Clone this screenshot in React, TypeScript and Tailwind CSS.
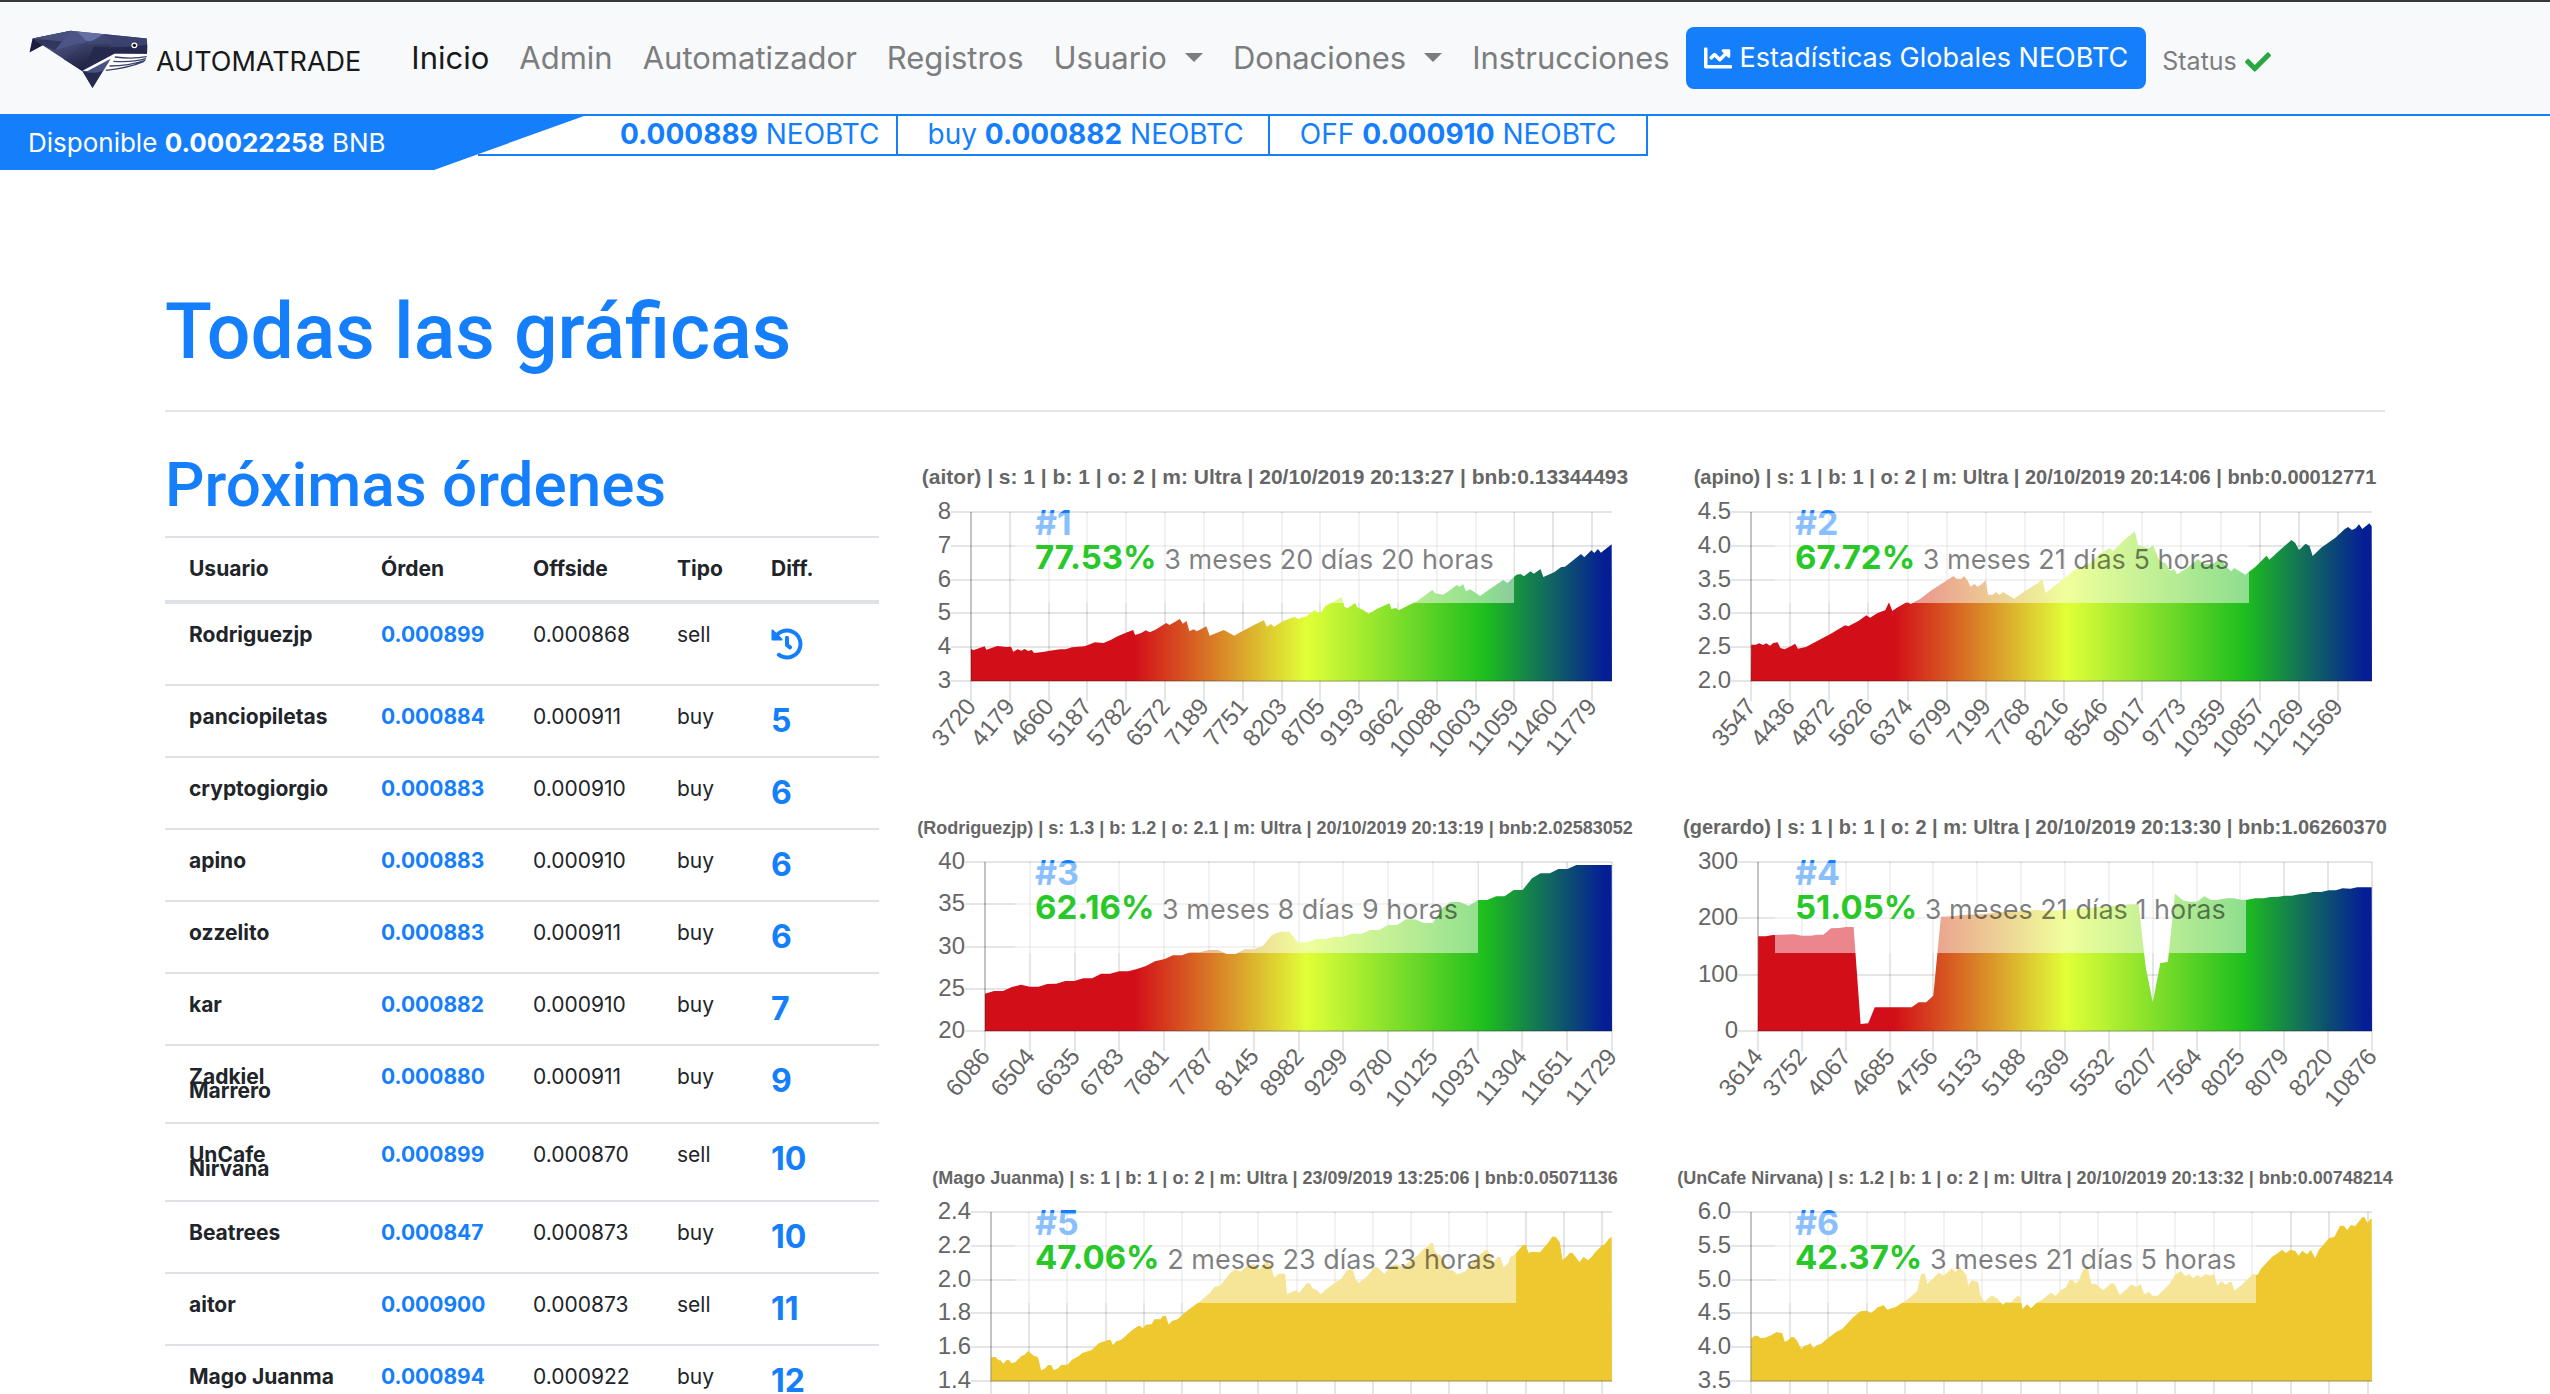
import React from "react";
import { FaChartLine, FaCheck, FaHistory } from "react-icons/fa";

type Order = { user: string; price: string; offside: string; side: string; diff: number | null };

const orders: Order[] = [
  { user: "Rodriguezjp", price: "0.000899", offside: "0.000868", side: "sell", diff: null },
  { user: "panciopiletas", price: "0.000884", offside: "0.000911", side: "buy", diff: 5 },
  { user: "cryptogiorgio", price: "0.000883", offside: "0.000910", side: "buy", diff: 6 },
  { user: "apino", price: "0.000883", offside: "0.000910", side: "buy", diff: 6 },
  { user: "ozzelito", price: "0.000883", offside: "0.000911", side: "buy", diff: 6 },
  { user: "kar", price: "0.000882", offside: "0.000910", side: "buy", diff: 7 },
  { user: "Zadkiel Marrero", price: "0.000880", offside: "0.000911", side: "buy", diff: 9 },
  { user: "UnCafe Nirvana", price: "0.000899", offside: "0.000870", side: "sell", diff: 10 },
  { user: "Beatrees", price: "0.000847", offside: "0.000873", side: "buy", diff: 10 },
  { user: "aitor", price: "0.000900", offside: "0.000873", side: "sell", diff: 11 },
  { user: "Mago Juanma", price: "0.000894", offside: "0.000922", side: "buy", diff: 12 },
];

type Chart = {
  title: string;
  titleSize: string;
  rank: number;
  gain: string;
  age: string;
  yLabels: string[];
  left: number;
  lastTick: number;
  ticks: number;
  xLabels: string[];
  rainbow: boolean;
  samples: string;
};

const charts: Chart[] = [
  {
    title: "(aitor) | s: 1 | b: 1 | o: 2 | m: Ultra | 20/10/2019 20:13:27 | bnb:0.13344493",
    titleSize: "text-[21px]",
    rank: 1,
    gain: "77.53%",
    age: "3 meses 20 días 20 horas",
    yLabels: ["8", "7", "6", "5", "4", "3"],
    left: 46,
    lastTick: 667,
    ticks: 17,
    xLabels: ["3720", "4179", "4660", "5187", "5782", "6572", "7189", "7751", "8203", "8705", "9193", "9662", "10088", "10603", "11059", "11460", "11779"],
    rainbow: true,
    samples:
      "129,599 134,604 155,593 158,592 162,602 185,591 205,594 214,593 219,608 228,601 236,605 243,600 250,606 258,603 263,612 285,608 296,605 318,601 330,601 343,595 370,592 392,580 410,582 425,573 440,562 460,550 473,543 477,558 490,552 500,544 508,550 520,542 543,522 550,528 572,510 578,524 586,516 592,547 601,541 608,547 628,532 635,560 665,543 687,560 700,550 730,527 750,514 756,533 765,525 771,533 790,517 815,503 822,510 840,502 858,483 865,493 873,487 880,471 900,456 915,444 921,474 928,477 943,462 949,476 960,482 972,495 990,479 1016,463 1020,480 1029,477 1036,484 1050,473 1075,456 1107,423 1113,433 1130,437 1145,423 1158,408 1165,413 1172,405 1178,427 1187,421 1208,441 1225,424 1257,393 1266,402 1285,377 1294,375 1301,382 1315,367 1322,374 1336,360 1342,384 1365,370 1380,354 1388,353 1422,315 1429,325 1444,304 1450,312 1458,300 1464,311 1487,286",
  },
  {
    title: "(apino) | s: 1 | b: 1 | o: 2 | m: Ultra | 20/10/2019 20:14:06 | bnb:0.00012771",
    titleSize: "text-[20px]",
    rank: 2,
    gain: "67.72%",
    age: "3 meses 21 días 5 horas",
    yLabels: ["4.5", "4.0", "3.5", "3.0", "2.5", "2.0"],
    left: 66,
    lastTick: 653,
    ticks: 16,
    xLabels: ["3547", "4436", "4872", "5626", "6374", "6799", "7199", "7768", "8216", "8546", "9017", "9773", "10359", "10857", "11269", "11569"],
    rainbow: true,
    samples:
      "172,587 182,587 189,583 197,588 204,583 212,590 219,582 228,580 234,597 243,601 257,591 265,584 271,599 288,594 340,555 371,529 378,532 400,515 416,499 424,506 440,492 456,484 464,460 471,486 480,477 503,458 510,465 530,450 555,423 601,381 607,389 618,389 623,381 631,395 637,413 645,405 652,413 660,406 669,394 674,437 684,437 691,429 698,438 706,429 729,449 752,427 780,402 789,390 796,432 830,394 858,362 880,350 895,338 910,315 932,297 939,306 960,276 985,247 992,288 1000,293 1015,298 1024,289 1034,325 1040,340 1050,341 1060,365 1068,360 1075,376 1095,358 1119,330 1130,345 1150,345 1165,330 1180,355 1189,367 1196,357 1219,377 1240,354 1264,320 1270,332 1295,300 1317,273 1325,282 1333,303 1347,284 1355,290 1362,321 1380,296 1410,266 1430,240 1437,234 1445,243 1453,238 1460,226 1467,240 1482,223 1487,232",
  },
  {
    title: "(Rodriguezjp) | s: 1.3 | b: 1.2 | o: 2.1 | m: Ultra | 20/10/2019 20:13:19 | bnb:2.02583052",
    titleSize: "text-[18px]",
    rank: 3,
    gain: "62.16%",
    age: "3 meses 8 días 9 horas",
    yLabels: ["40", "35", "30", "25", "20"],
    left: 60,
    lastTick: 687,
    ticks: 15,
    xLabels: ["6086", "6504", "6635", "6783", "7681", "7787", "8145", "8982", "9299", "9780", "10125", "10937", "11304", "11651", "11729"],
    rainbow: true,
    samples:
      "159,584 178,576 197,576 216,564 235,557 254,563 272,563 291,555 310,554 329,546 348,546 367,538 386,538 405,524 424,524 443,517 462,517 481,510 500,501 519,487 540,480 557,469 576,469 594,460 614,460 634,453 653,453 671,465 690,465 709,451 729,451 747,442 767,408 785,398 804,398 822,430 842,430 861,420 880,420 898,413 917,413 936,404 957,404 975,393 994,393 1013,378 1032,378 1051,361 1070,361 1089,372 1108,372 1126,330 1145,309 1165,309 1184,320 1204,303 1223,303 1242,292 1260,292 1279,273 1298,273 1318,238 1336,223 1356,223 1374,210 1393,210 1412,198 1487,198",
  },
  {
    title: "(gerardo) | s: 1 | b: 1 | o: 2 | m: Ultra | 20/10/2019 20:13:30 | bnb:1.06260370",
    titleSize: "text-[20px]",
    rank: 4,
    gain: "51.05%",
    age: "3 meses 21 días 1 horas",
    yLabels: ["300", "200", "100", "0"],
    left: 73,
    lastTick: 687,
    ticks: 15,
    xLabels: ["3614", "3752", "4067", "4685", "4756", "5153", "5188", "5369", "5532", "6207", "7564", "8025", "8079", "8220", "10876"],
    rainbow: true,
    samples:
      "187,412 203,412 218,408 235,407 262,406 280,410 298,410 312,407 325,407 341,388 358,387 373,384 389,384 404,675 420,673 434,625 512,625 527,610 543,610 558,590 574,353 605,351 620,348 660,346 700,340 740,337 775,333 800,335 840,333 880,328 930,322 977,316 993,316 1008,505 1023,610 1039,492 1055,489 1070,284 1087,304 1100,308 1117,308 1132,292 1147,303 1162,302 1180,298 1195,298 1210,302 1223,302 1240,298 1257,298 1272,294 1290,293 1302,290 1318,290 1333,286 1348,284 1362,279 1380,279 1396,274 1411,274 1425,268 1442,269 1456,265 1487,265",
  },
  {
    title: "(Mago Juanma) | s: 1 | b: 1 | o: 2 | m: Ultra | 23/09/2019 13:25:06 | bnb:0.05071136",
    titleSize: "text-[18px]",
    rank: 5,
    gain: "47.06%",
    age: "2 meses 23 días 23 horas",
    yLabels: ["2.4", "2.2", "2.0", "1.8", "1.6", "1.4"],
    left: 66,
    lastTick: 677,
    ticks: 17,
    xLabels: [],
    rainbow: false,
    samples:
      "172,624 181,624 188,634 192,634 198,644 205,633 210,633 215,643 223,640 230,630 237,620 243,618 250,606 256,613 263,621 271,624 278,664 287,658 292,648 299,648 305,664 314,658 320,648 334,647 343,632 358,621 365,612 385,603 400,583 420,573 425,573 430,588 437,577 447,573 455,563 468,547 483,531 488,531 493,538 500,527 512,526 518,511 531,511 536,501 542,501 548,527 555,516 567,511 590,482 612,460 637,430 645,413 657,410 665,396 680,370 690,360 700,368 715,350 730,345 740,362 755,335 765,350 772,387 780,374 795,374 799,435 810,428 818,424 825,431 835,413 841,403 847,403 853,418 863,424 871,436 880,423 900,402 915,388 925,365 938,360 945,393 952,401 970,380 985,353 992,356 1005,375 1020,350 1030,345 1045,355 1060,335 1075,320 1088,300 1098,292 1103,282 1108,282 1113,310 1125,320 1140,362 1150,364 1160,376 1175,368 1190,345 1205,320 1220,303 1225,304 1232,330 1238,338 1245,324 1251,324 1258,355 1268,342 1272,325 1283,315 1299,288 1305,288 1311,312 1317,308 1335,310 1345,293 1352,282 1361,263 1368,263 1377,280 1383,334 1392,322 1398,312 1404,312 1411,325 1419,340 1427,324 1437,334 1445,323 1452,310 1465,292 1473,285 1480,271 1487,263",
  },
  {
    title: "(UnCafe Nirvana) | s: 1.2 | b: 1 | o: 2 | m: Ultra | 20/10/2019 20:13:32 | bnb:0.00748214",
    titleSize: "text-[18px]",
    rank: 6,
    gain: "42.37%",
    age: "3 meses 21 días 5 horas",
    yLabels: ["6.0", "5.5", "5.0", "4.5", "4.0", "3.5"],
    left: 66,
    lastTick: 683,
    ticks: 17,
    xLabels: [],
    rainbow: false,
    samples:
      "172,568 180,560 186,560 192,568 202,566 215,558 226,549 238,553 243,578 250,574 257,564 263,565 270,577 278,600 285,590 293,587 297,582 304,598 312,588 320,585 335,567 353,548 365,540 375,525 388,505 404,487 418,485 425,493 434,483 440,475 453,469 460,482 478,474 492,461 508,446 524,425 532,375 540,374 545,404 560,385 570,371 580,380 597,358 606,370 613,352 620,365 628,378 632,410 640,393 653,400 658,440 666,458 682,439 695,450 705,467 712,459 723,460 735,442 742,442 747,480 757,466 765,478 778,460 790,451 805,433 810,433 817,441 828,424 838,416 847,393 853,393 860,404 868,390 874,366 884,350 893,404 903,406 918,424 935,403 942,404 953,438 968,420 978,406 988,415 997,405 1005,436 1015,428 1022,440 1033,440 1045,424 1058,406 1072,375 1083,366 1092,382 1100,375 1108,388 1118,378 1125,386 1135,375 1145,380 1153,376 1160,410 1168,396 1178,408 1185,399 1190,400 1196,425 1212,407 1235,375 1245,378 1252,360 1275,325 1297,303 1305,312 1315,302 1325,306 1332,320 1340,305 1350,316 1358,303 1367,328 1375,303 1397,267 1408,264 1420,230 1428,230 1435,243 1443,228 1452,232 1460,217 1467,205 1472,205 1478,222 1484,210 1487,210",
  },
];

const TOP = 63;
const BOTTOM = 232;
const RIGHT = 687;

// Samples sit on a finer grid than the drawing; this brings them to drawing units.
function toPoint(pair: string) {
  const [x, y] = pair.split(",").map(Number);
  return `${(x * 0.4719 - 15).toFixed(1)},${(y / 3).toFixed(1)}`;
}

function AreaChart({ chart }: { chart: Chart }) {
  const { left, ticks, lastTick, yLabels } = chart;
  const area = `${left},${BOTTOM} ${chart.samples.split(" ").map(toPoint).join(" ")} ${RIGHT},${BOTTOM}`;
  const fillId = `fill-${chart.rank}`;
  const xs = Array.from({ length: ticks }, (_, i) => Math.round(left + ((lastTick - left) * i) / (ticks - 1)));
  const ys = yLabels.map((_, i) => Math.round(TOP + ((BOTTOM - TOP) * i) / (yLabels.length - 1)));
  return (
    <figure className="relative">
      <svg viewBox="0 0 700 350" className="block w-full overflow-visible font-['Liberation_Sans',sans-serif]" role="img" aria-label={chart.title}>
        <defs>
          <linearGradient id={fillId} gradientUnits="userSpaceOnUse" x1="0" y1="0" x2="700" y2="0">
            <stop offset="0.3" stopColor="#d20f18" />
            <stop offset="0.545" stopColor="#e1ff37" />
            <stop offset="0.8" stopColor="#1ebe1e" />
            <stop offset="0.97" stopColor="#051e96" />
          </linearGradient>
        </defs>
        <text x="350" y="35" textAnchor="middle" className={`fill-[#666] font-bold ${chart.titleSize}`}>
          {chart.title}
        </text>
        {ys.map((y) => (
          <line key={y} x1={left - 20} x2={RIGHT} y1={y} y2={y} stroke="#000" strokeOpacity="0.1" strokeWidth="2" />
        ))}
        {xs.map((x) => (
          <line key={x} x1={x} x2={x} y1={TOP} y2={BOTTOM + 20} stroke="#000" strokeOpacity="0.1" strokeWidth="2" />
        ))}
        <polygon points={area} fill={chart.rainbow ? `url(#${fillId})` : "#edc82e"} />
        <path d={`M${left} ${TOP}V${BOTTOM}H${RIGHT}`} fill="none" stroke="#000" strokeOpacity="0.14" strokeWidth="2" />
        {yLabels.map((label, i) => (
          <text key={label} x={left - 20} y={ys[i] + 7} textAnchor="end" className="fill-[#666] text-[24px]">
            {label}
          </text>
        ))}
        {chart.xLabels.map((label, i) => (
          <text key={label} x={0} y={8} textAnchor="end" transform={`translate(${xs[i]} 253) rotate(-50)`} className="fill-[#666] text-[24px]">
            {label}
          </text>
        ))}
      </svg>
      <figcaption className="absolute top-[56px] left-[90px]">
        <p className="pl-5 text-[34px] leading-9 font-bold text-[#157efb]">#{chart.rank}</p>
        <p className="absolute top-2 left-0 h-[90px] bg-white/50 px-5 pt-6 text-[27px] leading-10 whitespace-nowrap text-black/50">
          <strong className="text-[33px] font-bold text-[#28c828]">{chart.gain}</strong> {chart.age}
        </p>
      </figcaption>
    </figure>
  );
}

function WhaleLogo() {
  return (
    <svg viewBox="0 0 370 180" className="h-[60px] w-[123px]" aria-hidden="true">
      <defs>
        <linearGradient id="whale-mid" x1="0" y1="0" x2="0.6" y2="1">
          <stop offset="0" stopColor="#555f92" />
          <stop offset="1" stopColor="#262a4c" />
        </linearGradient>
        <linearGradient id="whale-dark" x1="0" y1="0" x2="0.7" y2="1">
          <stop offset="0" stopColor="#464e7c" />
          <stop offset="1" stopColor="#15152f" />
        </linearGradient>
      </defs>
      <path d="M11 31 126 8 354 31Q358 55 355 77L260 77 161 130 41 52 2 73Z" fill="url(#whale-mid)" />
      <path d="M11 31 41 52 2 73Z" fill="#1c1f3f" />
      <path d="M11 31 126 8 79 66 41 52Z" fill="#30365c" />
      <path d="M11 31 126 8 100 40Z" fill="#485080" />
      <path d="M126 8 196 18 108 96 79 66Z" fill="#4d5587" />
      <path d="M79 66 108 96 161 130 200 80 250 50 150 46Z" fill="url(#whale-dark)" opacity="0.75" />
      <path d="M144 10 222 18Q190 45 172 38Z" fill="#6670a5" />
      <path d="M222 18 354 31 355 52Q270 62 222 18Z" fill="#3b4270" />
      <path d="M196 56Q290 62 355 50L355 77 260 77 161 130Z" fill="#25294d" />
      <path d="M161 130 250 86 191 180Z" fill="#4a5283" />
      <path d="M161 130Q200 140 222 128L191 180Z" fill="#252a4e" />
      <path d="M257 77 161 128 176 129 246 92 230 128Q320 118 354 92L355 78Z" fill="#fff" />
      <path d="M258 87Q310 94 354 86M254 100Q310 104 352 92M242 114Q300 114 350 97M231 127Q300 120 346 100" fill="none" stroke="#3a4068" strokeWidth="4" />
      <circle cx="317" cy="52" r="9" fill="#fff" />
      <circle cx="317" cy="52" r="5" fill="#111" />
    </svg>
  );
}

function Caret() {
  return <span className="ml-[18px] inline-block border-x-[9px] border-t-[9px] border-x-transparent border-t-[#7c7d7e] align-[7px]" />;
}

const prices = [
  { label: "", value: "0.000889" },
  { label: "buy ", value: "0.000882" },
  { label: "OFF ", value: "0.000910" },
];

export default function App() {
  return (
    <div className="h-screen overflow-hidden bg-white font-['Inter',sans-serif] text-[#212529]">
      <header className="border-t-2 border-b-2 border-t-[#3a383b] border-b-[#157efb] bg-[#f8f9fb]">
        <nav className="flex h-28 items-center pl-[29px] whitespace-nowrap text-[#7c7d7e]">
          <a href="#inicio" className="flex items-center gap-1 text-[27px] text-[#18191a]">
            <WhaleLogo />
            <span className="pt-2">AUTOMATRADE</span>
          </a>
          <ul className="ml-[50px] flex items-center gap-[30px] text-[31px]">
            <li><a href="#inicio" className="text-[#18191a]">Inicio</a></li>
            <li><a href="#admin">Admin</a></li>
            <li><a href="#automatizador">Automatizador</a></li>
            <li><a href="#registros">Registros</a></li>
            <li><button type="button">Usuario<Caret /></button></li>
            <li><button type="button">Donaciones<Caret /></button></li>
            <li><a href="#instrucciones">Instrucciones</a></li>
          </ul>
          <a href="#estadisticas" className="ml-4 flex h-[62px] items-center gap-2 rounded-lg bg-[#157efb] px-[18px] text-[27px] text-white">
            <FaChartLine className="size-7" aria-hidden="true" />
            Estadísticas Globales NEOBTC
          </a>
          <a href="#status" className="ml-4 flex items-center gap-2 pt-2 text-[25px]">
            Status
            <FaCheck className="size-[26px] text-[#2aa745]" aria-hidden="true" />
          </a>
        </nav>
      </header>

      <section className="flex h-14 items-start whitespace-nowrap" aria-label="Precios">
        <p className="h-[54px] w-[584px] bg-[#157efb] pl-7 text-[26px] leading-[54px] text-white [clip-path:polygon(0_0,100%_0,434px_100%,0_100%)]">
          Disponible <strong>0.00022258</strong> BNB
        </p>
        <div className="-ml-[106px] flex h-10 border-b-2 border-[#157efb] pl-[106px] text-[28px] text-[#157efb]">
          {prices.map((p) => (
            <p key={p.value} className="border-r-2 border-[#157efb] pr-6 pl-[30px] leading-9 first:pr-4 first:pl-9 last:pr-[30px]">
              {p.label}<strong>{p.value}</strong> NEOBTC
            </p>
          ))}
        </div>
      </section>

      <main className="mx-auto max-w-[2220px]">
        <h1 className="border-b-2 border-black/10 pt-[111px] pb-[29px] font-['Roboto',sans-serif] text-[77px] leading-[98px] font-medium text-[#157efb]">
          Todas las gráficas
        </h1>
        <div className="grid grid-cols-3 gap-x-[60px] pt-[37px]">
          <section className="-mr-[14px]">
            <h2 className="pb-4 font-['Roboto',sans-serif] text-[62px] leading-[71px] font-medium text-[#157efb]">Próximas órdenes</h2>
            <table className="w-full table-fixed border-collapse text-left text-[21px] leading-[14px]">
              <colgroup>
                <col className="w-[192px]" />
                <col className="w-[152px]" />
                <col className="w-[144px]" />
                <col className="w-[94px]" />
                <col />
              </colgroup>
              <thead>
                <tr className="border-t-2 border-b-4 border-[#dee2e6]">
                  {["Usuario", "Órden", "Offside", "Tipo", "Diff."].map((h) => (
                    <th key={h} scope="col" className="py-6 pl-6 font-bold">{h}</th>
                  ))}
                </tr>
              </thead>
              <tbody>
                {orders.map((o) => (
                  <tr key={o.user} className="border-b-2 border-[#dee2e6] align-top">
                    <th scope="row" className="py-6 pr-4 pl-6 font-bold">{o.user}</th>
                    <td className="py-6 pl-6 font-bold text-[#157efb]">{o.price}</td>
                    <td className="py-6 pl-6">{o.offside}</td>
                    <td className="py-6 pl-6">{o.side}</td>
                    <td className="py-6 pl-6 text-[32px] leading-[22px] font-bold text-[#157efb]">
                      {o.diff === null ? <FaHistory className="size-8" aria-label="Pendiente" /> : o.diff}
                    </td>
                  </tr>
                ))}
              </tbody>
            </table>
          </section>
          <section className="col-span-2 grid grid-cols-2 content-start gap-x-[60px]" aria-label="Gráficas">
            {charts.map((c) => (
              <AreaChart key={c.rank} chart={c} />
            ))}
          </section>
        </div>
      </main>
    </div>
  );
}
